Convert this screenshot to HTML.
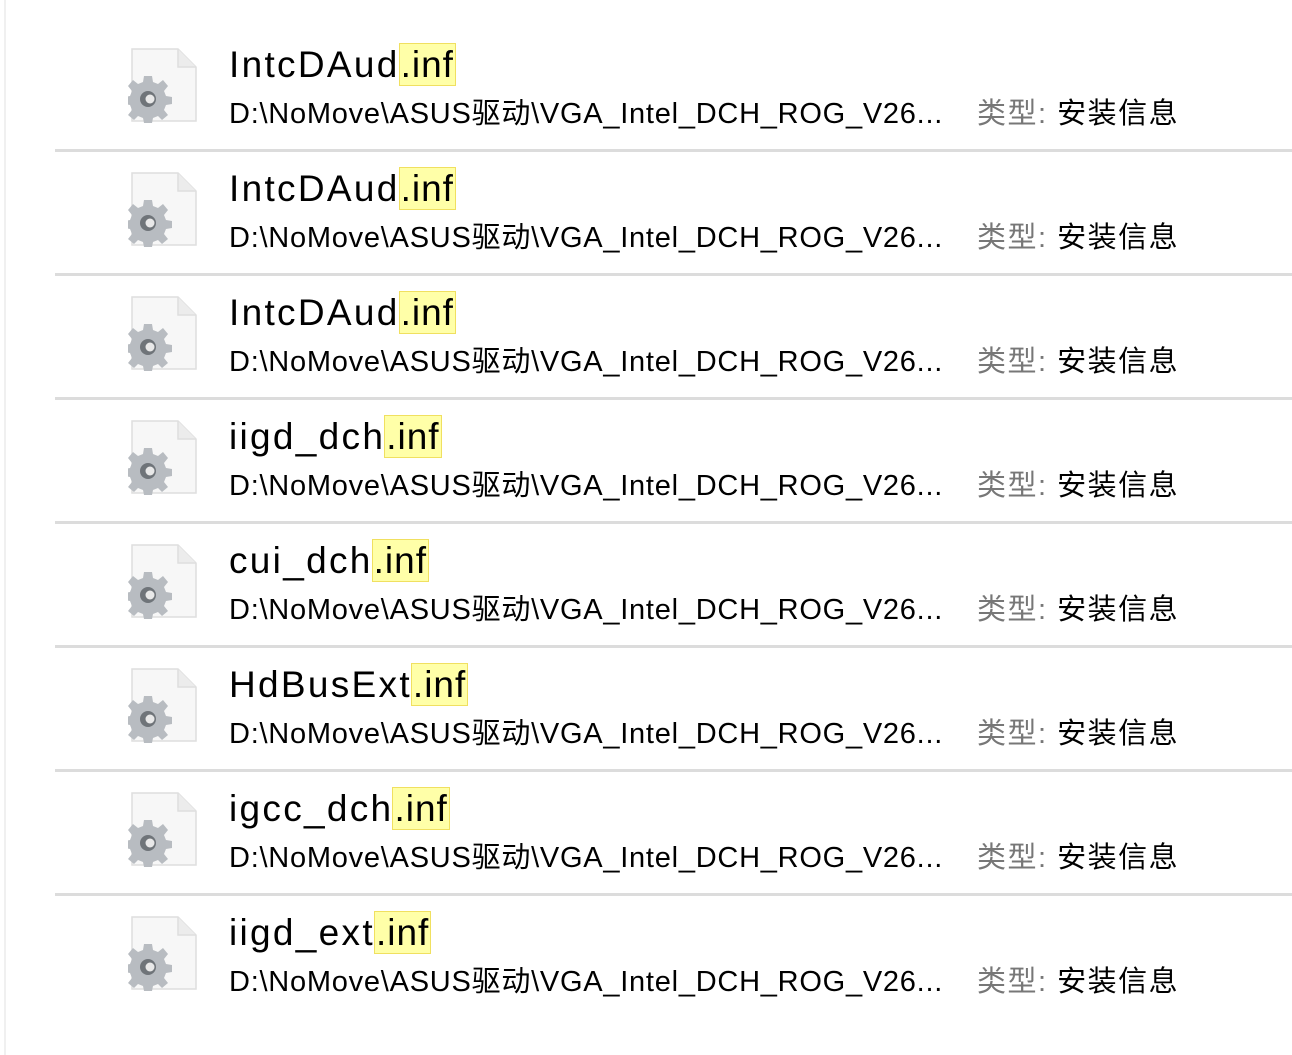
<!DOCTYPE html>
<html><head><meta charset="utf-8"><style>
body{margin:0;width:1292px;height:1055px;background:#fff;position:relative;overflow:hidden;font-family:"Liberation Sans","Noto Sans CJK SC",sans-serif}
.lb{position:absolute;left:4px;top:0;width:2px;height:1055px;background:#f0f0f0}
.row{position:absolute;left:0;width:1292px;height:124px}
.sep{position:absolute;left:55px;right:0;top:149px;height:3px;background:#dcdcdc}
.ic{position:absolute;left:128px;top:48px}
.t{position:absolute;left:229px;top:41px;font-size:37px;line-height:48px;color:#000;white-space:nowrap;letter-spacing:2.3px}
.t b{font-weight:normal;background:#ffffa8;outline:1px solid #f0e060;padding:0 1px 0 1px;letter-spacing:1px}
.p{position:absolute;left:229px;top:95px;font-size:29px;line-height:38px;color:#000;white-space:nowrap;letter-spacing:0.75px}
.k{position:absolute;left:977px;top:95px;font-size:29px;line-height:38px;white-space:nowrap;letter-spacing:1.5px}
.k span{color:#777}
</style></head><body>
<div class="lb"></div>
<svg width="0" height="0" style="position:absolute"><defs>
<g id="ico">
<path d="M4 1 H50 L68 19 V73 H4 Z" fill="#f7f7f7" stroke="#dedede" stroke-width="1.5"/>
<path d="M50 1 V19 H68" fill="#ececec" stroke="#dedede" stroke-width="1.5"/>
<g transform="translate(20 52)">
<path d="M-4 -19 H4 L5 -13 L10 -11 L15 -15 L20 -9 L16 -4 L18 1 L24 2 V9 L18 10 L16 15 L20 20 L14 25 L10 21 L5 23 L4 28 H-4 L-5 23 L-10 21 L-14 25 L-20 20 L-16 15 L-18 10 L-24 9 V2 L-18 1 L-16 -4 L-20 -9 L-15 -15 L-10 -11 L-5 -13 Z" fill="#b8bcc1" transform="translate(0 -5)"/>
<circle cx="0" cy="-1" r="8" fill="#6f7479"/><circle cx="2" cy="-1" r="4.5" fill="#e8e8e8"/>
</g></g></defs></svg>
<div id="rows"></div>
<script>
var n=["IntcDAud","IntcDAud","IntcDAud","iigd_dch","cui_dch","HdBusExt","igcc_dch","iigd_ext"],h="";
n.forEach(function(s,i){h+='<div class="row" style="top:'+(i*124)+'px"><svg class="ic" width="72" height="80" viewBox="0 0 72 80"><use href="#ico"/></svg><div class="t">'+s+'<b>.inf</b></div><div class="p">D:\\NoMove\\ASUS驱动\\VGA_Intel_DCH_ROG_V26...</div><div class="k"><span>类型:</span> 安装信息</div>'+(i<7?'<div class="sep"></div>':'')+'</div>';});
document.getElementById("rows").innerHTML=h;
</script>
</body></html>
